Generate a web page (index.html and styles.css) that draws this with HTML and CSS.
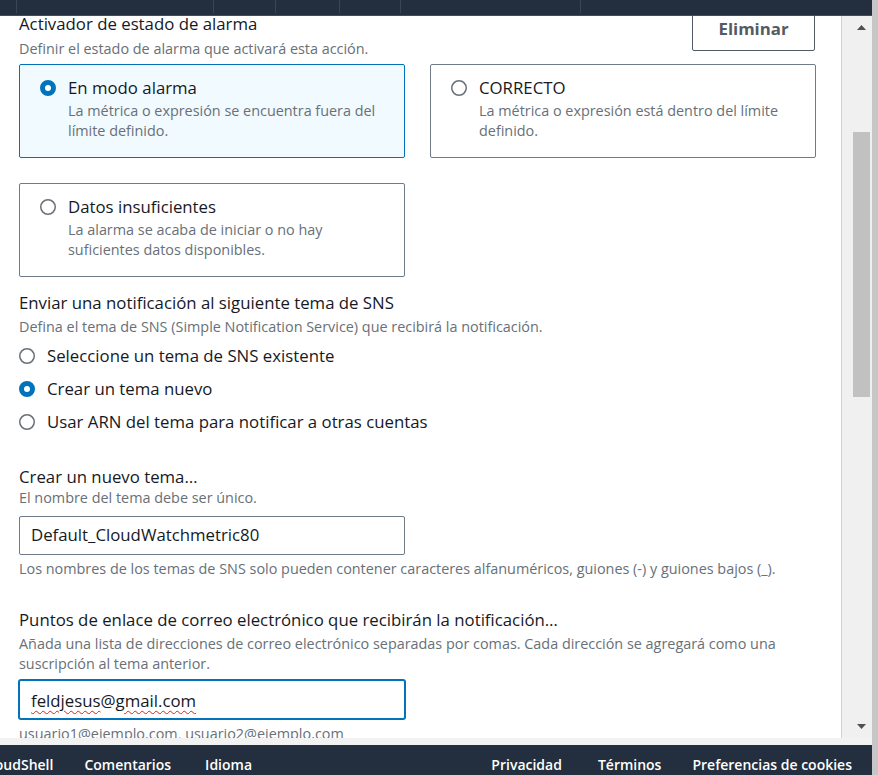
FILE: index.html
```html
<!DOCTYPE html>
<html lang="es">
<head>
<meta charset="utf-8">
<title>Acciones de alarma</title>
<link rel="stylesheet" href="styles.css">
</head>
<body>
<div class="window">
  <div class="app">
    <header class="topbar">
      <span class="nav nav-a"></span>
      <span class="nav nav-b"></span>
      <span class="nav nav-c"></span>
      <span class="nav nav-d"></span>
      <span class="nav nav-e"></span>
      <span class="nav nav-f"></span>
    </header>

    <div class="middle">
      <main class="viewport">
        <div class="content">
          <div class="section-head">
            <div class="head-text">
              <div class="label">Activador de estado de alarma</div>
              <div class="desc desc-tight">Definir el estado de alarma que activará esta acción.</div>
            </div>
            <button class="btn" type="button">Eliminar</button>
          </div>

          <div class="tiles">
            <div class="tile tile-selected">
              <div class="tile-head">
                <svg class="radio" width="16" height="16" viewBox="0 0 16 16"><circle cx="8" cy="8" r="5.5" fill="#fff" stroke="#0073bb" stroke-width="5"/></svg>
                <span>En modo alarma</span>
              </div>
              <div class="tile-desc">La métrica o expresión se encuentra fuera del límite definido.</div>
            </div>
            <div class="tile">
              <div class="tile-head">
                <svg class="radio" width="16" height="16" viewBox="0 0 16 16"><circle cx="8" cy="8" r="7.25" fill="#fff" stroke="#687078" stroke-width="1.5"/></svg>
                <span>CORRECTO</span>
              </div>
              <div class="tile-desc">La métrica o expresión está dentro del límite definido.</div>
            </div>
            <div class="tile">
              <div class="tile-head">
                <svg class="radio" width="16" height="16" viewBox="0 0 16 16"><circle cx="8" cy="8" r="7.25" fill="#fff" stroke="#687078" stroke-width="1.5"/></svg>
                <span>Datos insuficientes</span>
              </div>
              <div class="tile-desc">La alarma se acaba de iniciar o no hay suficientes datos disponibles.</div>
            </div>
          </div>

          <div class="label label-sns">Enviar una notificación al siguiente tema de SNS</div>
          <div class="desc desc-sns">Defina el tema de SNS (Simple Notification Service) que recibirá la notificación.</div>

          <div class="radio-group">
            <div class="radio-row">
              <svg class="radio" width="16" height="16" viewBox="0 0 16 16"><circle cx="8" cy="8" r="7.25" fill="#fff" stroke="#687078" stroke-width="1.5"/></svg>
              <span>Seleccione un tema de SNS existente</span>
            </div>
            <div class="radio-row">
              <svg class="radio" width="16" height="16" viewBox="0 0 16 16"><circle cx="8" cy="8" r="5.5" fill="#fff" stroke="#0073bb" stroke-width="5"/></svg>
              <span>Crear un tema nuevo</span>
            </div>
            <div class="radio-row">
              <svg class="radio" width="16" height="16" viewBox="0 0 16 16"><circle cx="8" cy="8" r="7.25" fill="#fff" stroke="#687078" stroke-width="1.5"/></svg>
              <span>Usar ARN del tema para notificar a otras cuentas</span>
            </div>
          </div>

          <div class="label label-topic">Crear un nuevo tema…</div>
          <div class="desc">El nombre del tema debe ser único.</div>
          <div class="input input-topic">Default_CloudWatchmetric80</div>
          <div class="desc help">Los nombres de los temas de SNS solo pueden contener caracteres alfanuméricos, guiones (-) y guiones bajos (_).</div>

          <div class="label label-email">Puntos de enlace de correo electrónico que recibirán la notificación…</div>
          <div class="desc desc-email">Añada una lista de direcciones de correo electrónico separadas por comas. Cada dirección se agregará como una suscripción al tema anterior.</div>
          <div class="input input-focus"><span class="misspelled">feldjesus</span>@<span class="misspelled">gmail.com</span></div>
          <div class="desc help">usuario1@ejemplo.com, usuario2@ejemplo.com</div>
        </div>
      </main>

      <div class="scrollbar">
        <div class="sb-arrow">
          <svg width="9" height="5" viewBox="0 0 9 5"><polygon points="0,5 4.5,0 9,5" fill="#505050"/></svg>
        </div>
        <div class="sb-thumb"></div>
        <div class="sb-spacer"></div>
        <div class="sb-arrow">
          <svg width="9" height="5" viewBox="0 0 9 5"><polygon points="0,0 9,0 4.5,5" fill="#505050"/></svg>
        </div>
      </div>
    </div>

    <div class="bottom-strip"></div>

    <footer class="footer">
      <div class="footer-group footer-left">
        <span>CloudShell</span>
        <span class="f-feedback">Comentarios</span>
        <span class="f-lang">Idioma</span>
      </div>
      <div class="footer-group footer-right">
        <span>Privacidad</span>
        <span class="f-terms">Términos</span>
        <span class="f-cookies">Preferencias de cookies</span>
      </div>
    </footer>
  </div>
  <div class="edge"></div>
</div>
</body>
</html>
```

FILE: styles.css
```css
* {
  box-sizing: border-box;
}

html, body {
  margin: 0;
  padding: 0;
}

body {
  width: 878px;
  height: 775px;
  overflow: hidden;
  background: #ffffff;
  font-family: "Open Sans", "Noto Sans", "Liberation Sans", sans-serif;
  color: #16191f;
}

.window {
  display: flex;
  height: 775px;
}

.app {
  flex: 1;
  min-width: 0;
  display: flex;
  flex-direction: column;
  height: 775px;
}

.edge {
  width: 6px;
  flex: none;
  background: #c6c6c6;
}

/* top navigation bar (mostly scrolled away) */
.topbar {
  flex: none;
  height: 16px;
  background: #232f3e;
  border-bottom: 1px solid #414b59;
  display: flex;
  padding-left: 16px;
}

.nav {
  height: 13px;
  border-left: 1px solid #3a4553;
}

.nav-a { width: 197px; }
.nav-b { width: 62px; }
.nav-c { width: 64px; }
.nav-d { width: 61px; }
.nav-e { width: 180px; }
.nav-f { width: 40px; }

/* middle: scrolled content + scrollbar */
.middle {
  flex: 1;
  min-height: 0;
  display: flex;
}

.viewport {
  flex: 1;
  min-width: 0;
  overflow: hidden;
  background: #ffffff;
}

.content {
  margin-top: -5px;
  padding: 0 26px 0 19px;
}

.section-head {
  display: flex;
  justify-content: space-between;
  align-items: flex-start;
}

.head-text {
  padding-top: 2px;
}

.label {
  font-size: 16.8px;
  line-height: 22px;
  color: #16191f;
}

.desc {
  font-size: 14.4px;
  line-height: 20px;
  color: #687078;
}

.desc-tight {
  margin-top: 4px;
}

.btn {
  width: 123px;
  height: 40px;
  border: 1px solid #545b64;
  border-radius: 2px;
  background: #ffffff;
  color: #545b64;
  font-family: inherit;
  font-size: 16.8px;
  font-weight: 700;
  line-height: 22px;
  padding: 0 0 4px;
}

/* tiles */
.tiles {
  margin-top: 5px;
  display: grid;
  grid-template-columns: 386px 386px;
  gap: 25px;
}

.tile {
  border: 1px solid #6f7b87;
  border-radius: 2px;
  padding: 12px 20px 16px;
  background: #ffffff;
}

.tile-selected {
  border-color: #0073bb;
  background: #f1faff;
}

.tile-head {
  display: flex;
  align-items: center;
  gap: 12px;
  font-size: 16.8px;
  line-height: 22px;
  color: #16191f;
}

.radio {
  flex: none;
  display: block;
}

.tile-desc {
  margin-top: 2px;
  padding-left: 28px;
  font-size: 14.4px;
  line-height: 20px;
  color: #687078;
}

/* SNS section */
.label-sns {
  margin-top: 15px;
}

.desc-sns {
  margin-top: 3px;
}

.radio-group {
  margin-top: 7px;
  display: flex;
  flex-direction: column;
  gap: 9px;
}

.radio-row {
  display: flex;
  align-items: center;
  gap: 12px;
  font-size: 16.8px;
  line-height: 24px;
  color: #16191f;
}

.label-topic {
  margin-top: 32px;
}

.input {
  width: 386px;
  height: 39px;
  border: 1px solid #6f7b87;
  border-radius: 2px;
  padding: 0 11px 2px;
  display: flex;
  align-items: center;
  font-size: 16.8px;
  line-height: 22px;
  color: #16191f;
  background: #ffffff;
  white-space: nowrap;
}

.input-topic {
  margin-top: 8px;
}

.help {
  margin-top: 4px;
}

.label-email {
  margin-top: 30px;
}

.desc-email {
  margin-top: 3px;
}

.input-focus {
  margin-top: 6px;
  padding-top: 2px;
  padding-bottom: 0;
  border-color: #0073bb;
  box-shadow: 0 0 0 1px #0073bb;
}

.input-focus + .help {
  margin-top: 5px;
}

.misspelled {
  text-decoration: underline wavy #e0201a;
  text-decoration-thickness: 1px;
  text-underline-offset: 3px;
}

/* scrollbar */
.scrollbar {
  flex: none;
  width: 31px;
  border-left: 1px solid #d2d2d2;
  background: #f0f0f0;
  display: flex;
  flex-direction: column;
}

.sb-arrow {
  flex: none;
  height: 23px;
  width: 17px;
  margin-left: 11px;
  display: flex;
  align-items: center;
  justify-content: center;
}

.sb-thumb {
  flex: none;
  width: 17px;
  height: 265px;
  margin-left: 11px;
  margin-top: 93px;
  background: #c1c1c1;
}

.sb-spacer {
  flex: 1;
}

.bottom-strip {
  flex: none;
  height: 7px;
  background: #f2f2f2;
}

/* footer */
.footer {
  flex: none;
  height: 30px;
  overflow: hidden;
  background: #232f3e;
  display: flex;
  justify-content: space-between;
  padding: 10px 20px 0 0;
  font-size: 14px;
  font-weight: 600;
  line-height: 20px;
  color: #ffffff;
  white-space: nowrap;
}

.footer-group {
  display: flex;
}

.footer-left {
  margin-left: -18px;
}

.f-feedback {
  margin-left: 31px;
}

.f-lang {
  margin-left: 34px;
}

.f-terms {
  margin-left: 36px;
}

.f-cookies {
  margin-left: 31px;
}
```
